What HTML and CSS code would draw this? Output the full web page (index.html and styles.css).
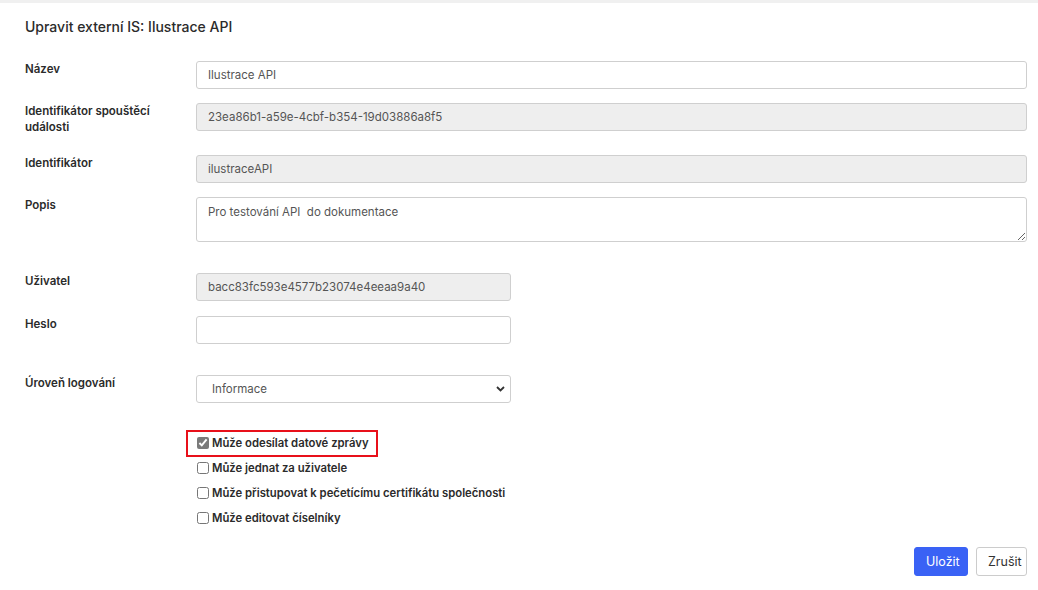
FILE: index.html
```html
<!DOCTYPE html>
<html lang="cs">
<head>
<meta charset="utf-8">
<title>Upravit externí IS</title>
<link rel="stylesheet" href="styles.css">
</head>
<body>
<div class="topbar"></div>
<main class="page">
  <h1 class="title">Upravit externí IS: Ilustrace API</h1>
  <form class="form">
    <div class="row">
      <label class="lbl">Název</label>
      <div class="ctl"><input class="inp" type="text" value="Ilustrace API"></div>
    </div>
    <div class="row row-gap20">
      <label class="lbl">Identifikátor spouštěcí události</label>
      <div class="ctl"><input class="inp inp-disabled" type="text" value="23ea86b1-a59e-4cbf-b354-19d03886a8f5" readonly></div>
    </div>
    <div class="row">
      <label class="lbl">Identifikátor</label>
      <div class="ctl"><input class="inp inp-disabled" type="text" value="ilustraceAPI" readonly></div>
    </div>
    <div class="row row-gap31">
      <label class="lbl">Popis</label>
      <div class="ctl"><textarea class="inp area">Pro testování API  do dokumentace</textarea></div>
    </div>
    <div class="row row-gap15">
      <label class="lbl">Uživatel</label>
      <div class="ctl"><input class="inp inp-short inp-disabled" type="text" value="bacc83fc593e4577b23074e4eeaa9a40" readonly></div>
    </div>
    <div class="row row-gap31">
      <label class="lbl">Heslo</label>
      <div class="ctl"><input class="inp inp-short" type="password"></div>
    </div>
    <div class="row row-gap27">
      <label class="lbl">Úroveň logování</label>
      <div class="ctl">
        <div class="select-wrap">
          <select class="inp sel">
            <option>Informace</option>
          </select>
          <svg class="chev" width="9" height="6" viewBox="0 0 9 6"><path d="M1 1 L4.5 4.5 L8 1" fill="none" stroke="#333" stroke-width="1.8"/></svg>
        </div>
      </div>
    </div>
    <div class="checks">
      <div class="highlight">
        <label class="chk"><input type="checkbox" class="cb" checked>Může odesílat datové zprávy</label>
      </div>
      <label class="chk"><input type="checkbox" class="cb">Může jednat za uživatele</label>
      <label class="chk"><input type="checkbox" class="cb">Může přistupovat k pečetícímu certifikátu společnosti</label>
      <label class="chk"><input type="checkbox" class="cb">Může editovat číselníky</label>
    </div>
    <div class="actions">
      <button type="button" class="btn btn-primary">Uložit</button>
      <button type="button" class="btn btn-default">Zrušit</button>
    </div>
  </form>
</main>
</body>
</html>
```
FILE: styles.css
```css
* { box-sizing: border-box; }
html, body { margin: 0; padding: 0; background: #fff; }
body {
  font-family: Inter, "Liberation Sans", Arial, sans-serif;
  color: #333;
  width: 1038px;
  height: 590px;
  overflow: hidden;
}
.topbar { height: 3px; background: #f0f0f0; }
.page { padding: 0 11px 0 25px; }
.title {
  margin: 14px 0 24px;
  font-size: 14px;
  line-height: 20px;
  font-weight: 500;
  color: #2b2b2b;
}
.form { display: flex; flex-direction: column; }
.row { display: flex; align-items: flex-start; margin-bottom: 14px; }
.row-gap20 { margin-bottom: 20px; }
.row-gap31 { margin-bottom: 31px; }
.row-gap15 { margin-bottom: 15px; }
.row-gap27 { margin-bottom: 27px; }
.lbl {
  width: 171px;
  flex: none;
  font-size: 11.5px;
  line-height: 16px;
  font-weight: 600;
  color: #2b2b2b;
  padding-right: 20px;
}
.ctl { flex: 1; min-width: 0; }
.inp {
  display: block;
  width: 100%;
  height: 28px;
  border: 1px solid #cfcfcf;
  border-radius: 3px;
  padding: 0 11px;
  font-family: Inter, "Liberation Sans", Arial, sans-serif;
  font-size: 11.5px;
  color: #555;
  background: #fff;
  outline: none;
}
.inp-disabled { background: #eee; }
.inp-short { width: 315px; }
.area {
  height: 45px;
  padding: 6px 11px;
  line-height: 16px;
  resize: vertical;
}
.select-wrap { position: relative; width: 315px; }
.sel {
  appearance: none;
  -webkit-appearance: none;
  padding-left: 15px;
  font-size: 11.5px;
}
.chev { position: absolute; right: 6px; top: 11px; pointer-events: none; }
.checks { display: flex; flex-direction: column; align-items: flex-start; padding-left: 171px; }
.highlight {
  border: 2px solid #e8101a;
  margin-left: -10px;
  padding: 2px 7px 3px 8px;
  margin-bottom: -2px;
}
.chk {
  display: flex;
  align-items: center;
  height: 25px;
  font-size: 11.3px;
  font-weight: 600;
  color: #2b2b2b;
}
.highlight .chk { height: 18px; }
.cb {
  width: 12px;
  height: 12px;
  margin: 0 3px 0 1px;
  accent-color: #7a7a7a;
}
.actions { display: flex; justify-content: flex-end; gap: 8px; margin-top: 17px; }
.btn {
  height: 29px;
  border-radius: 3px;
  font-family: Inter, "Liberation Sans", Arial, sans-serif;
  font-size: 12.5px;
  padding: 0 11px;
  cursor: pointer;
}
.btn-primary { background: #3a62f5; border: 1px solid #3a62f5; color: #fff; width: 54px; }
.btn-default { background: #fff; border: 1px solid #ccc; color: #333; width: 51px; }
```
